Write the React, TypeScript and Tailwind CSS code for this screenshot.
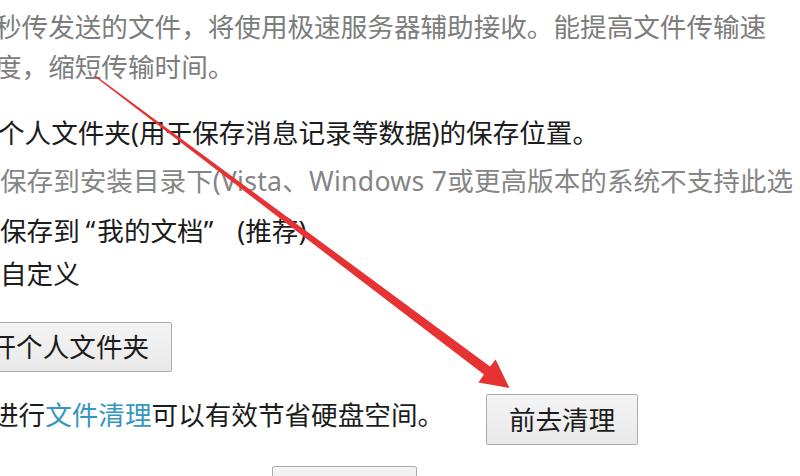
import React from "react";

const font = { fontFamily: '"Noto Sans", "Noto Sans CJK SC", sans-serif' };

export default function App() {
  return (
    <div
      className="relative w-[800px] h-[476px] overflow-hidden bg-white text-[26.6px] text-[#1c1c1c]"
      style={font}
    >
      <div className="flex flex-col">
        <div className="mt-[7px] ml-[-5px] text-[#7d7d7d] leading-[40px] whitespace-nowrap">
          <div>秒传发送的文件，将使用极速服务器辅助接收。能提高文件传输速</div>
          <div>度，缩短传输时间。</div>
        </div>
        <div className="mt-[26px] h-[48px] leading-[40px] whitespace-nowrap ml-[-2px]">
          个人文件夹(用于保存消息记录等数据)的保存位置。
        </div>
        <div className="h-[50px] leading-[40px] whitespace-nowrap text-[#858585]">
          保存到安装目录下(<span className="tracking-[0.3px]">Vista</span>、<span className="tracking-[0.3px]">Windows 7</span>或更高版本的系统不支持此选
        </div>
        <div className="h-[43px] leading-[40px] whitespace-nowrap">
          保存到<span className="ml-[6px]">“</span>
          <span className="ml-[2px]">我的文档</span>”<span className="ml-[24px]">(推荐)</span>
        </div>
        <div className="h-[40px] leading-[40px] whitespace-nowrap">自定义</div>
        <div className="mt-[28px] flex">
          <button className="ml-[-60px] h-[50px] w-[232px] border border-[#acacac] bg-gradient-to-b from-[#f4f4f4] to-[#e9e9e9] rounded-[2px] text-[26.6px] leading-[48px] text-[#1c1c1c] whitespace-nowrap">
            打开个人文件夹
          </button>
        </div>
        <div className="mt-[22px] flex items-start">
          <div className="ml-[-8px] h-[40px] leading-[42px] whitespace-nowrap">
            进行<span className="text-[#3796c1]">文件清理</span>可以有效节省硬盘空间。
          </div>
          <button className="ml-[42px] h-[51px] w-[152px] border border-[#acacac] bg-gradient-to-b from-[#f4f4f4] to-[#e9e9e9] rounded-[2px] text-[26.6px] leading-[48px] text-[#1c1c1c] whitespace-nowrap">
            前去清理
          </button>
        </div>
        <div className="mt-[21px] flex">
          <button className="ml-[272px] h-[50px] w-[145px] border border-[#acacac] bg-gradient-to-b from-[#f4f4f4] to-[#e9e9e9] rounded-[2px]" />
        </div>
      </div>

      <svg
        className="absolute left-0 top-0 pointer-events-none"
        width="800"
        height="476"
        viewBox="0 0 800 476"
      >
        <polygon
          points="94.6,76.6 95.4,75.4 490,366.5 495.6,359.4 509.5,388 478.4,382.4 484,374.5"
          fill="#e63232"
        />
      </svg>
    </div>
  );
}
